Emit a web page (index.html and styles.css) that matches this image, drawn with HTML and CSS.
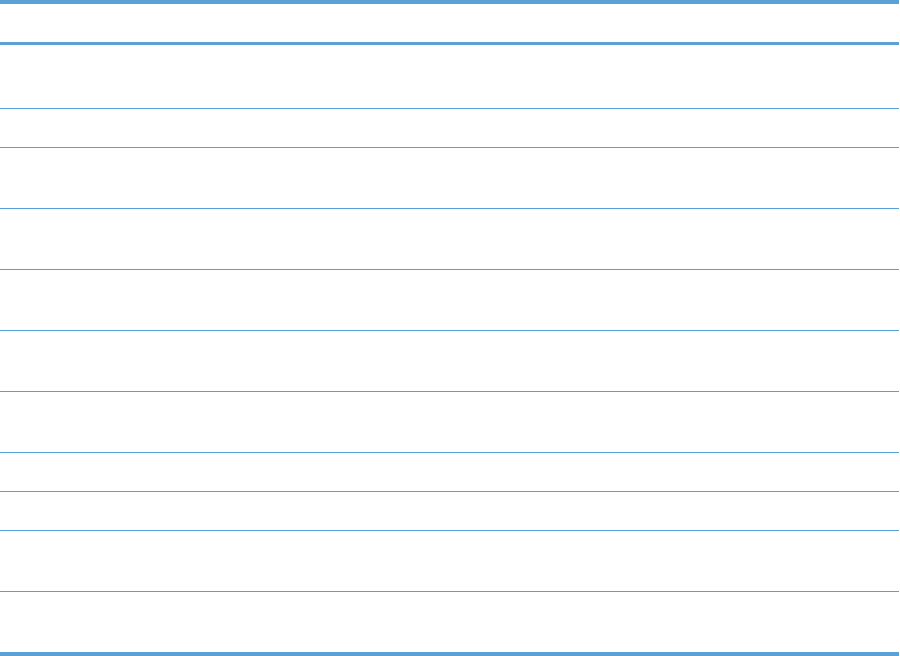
FILE: index.html
```html
<!DOCTYPE html>
<html lang="en">
<head>
<meta charset="utf-8">
<title>Table</title>
<link rel="stylesheet" href="styles.css">
</head>
<body>
<div class="table">
  <div class="head"></div>
  <div class="row r63"></div>
  <div class="row r38"></div>
  <div class="row r60"></div>
  <div class="row r60"></div>
  <div class="row r60"></div>
  <div class="row r60"></div>
  <div class="row r60"></div>
  <div class="row r38"></div>
  <div class="row r38"></div>
  <div class="row r60"></div>
  <div class="row r60 last"></div>
</div>
</body>
</html>
```
FILE: styles.css
```css
html, body {
  margin: 0;
  padding: 0;
  background: #ffffff;
  font-family: "Liberation Sans", Arial, sans-serif;
}
.table {
  width: 899px;
  display: flex;
  flex-direction: column;
  border-top: 4px solid #5aa2d5;
  border-bottom: 4px solid #5aa2d5;
}
.head {
  height: 38px;
  border-bottom: 3px solid #5aa2d5;
}
.row {
  border-bottom: 1px solid #55a2d8;
}
.row.last {
  border-bottom: none;
}
.r63 { height: 63px; }
.r38 { height: 38px; }
.r60 { height: 60px; }
```
